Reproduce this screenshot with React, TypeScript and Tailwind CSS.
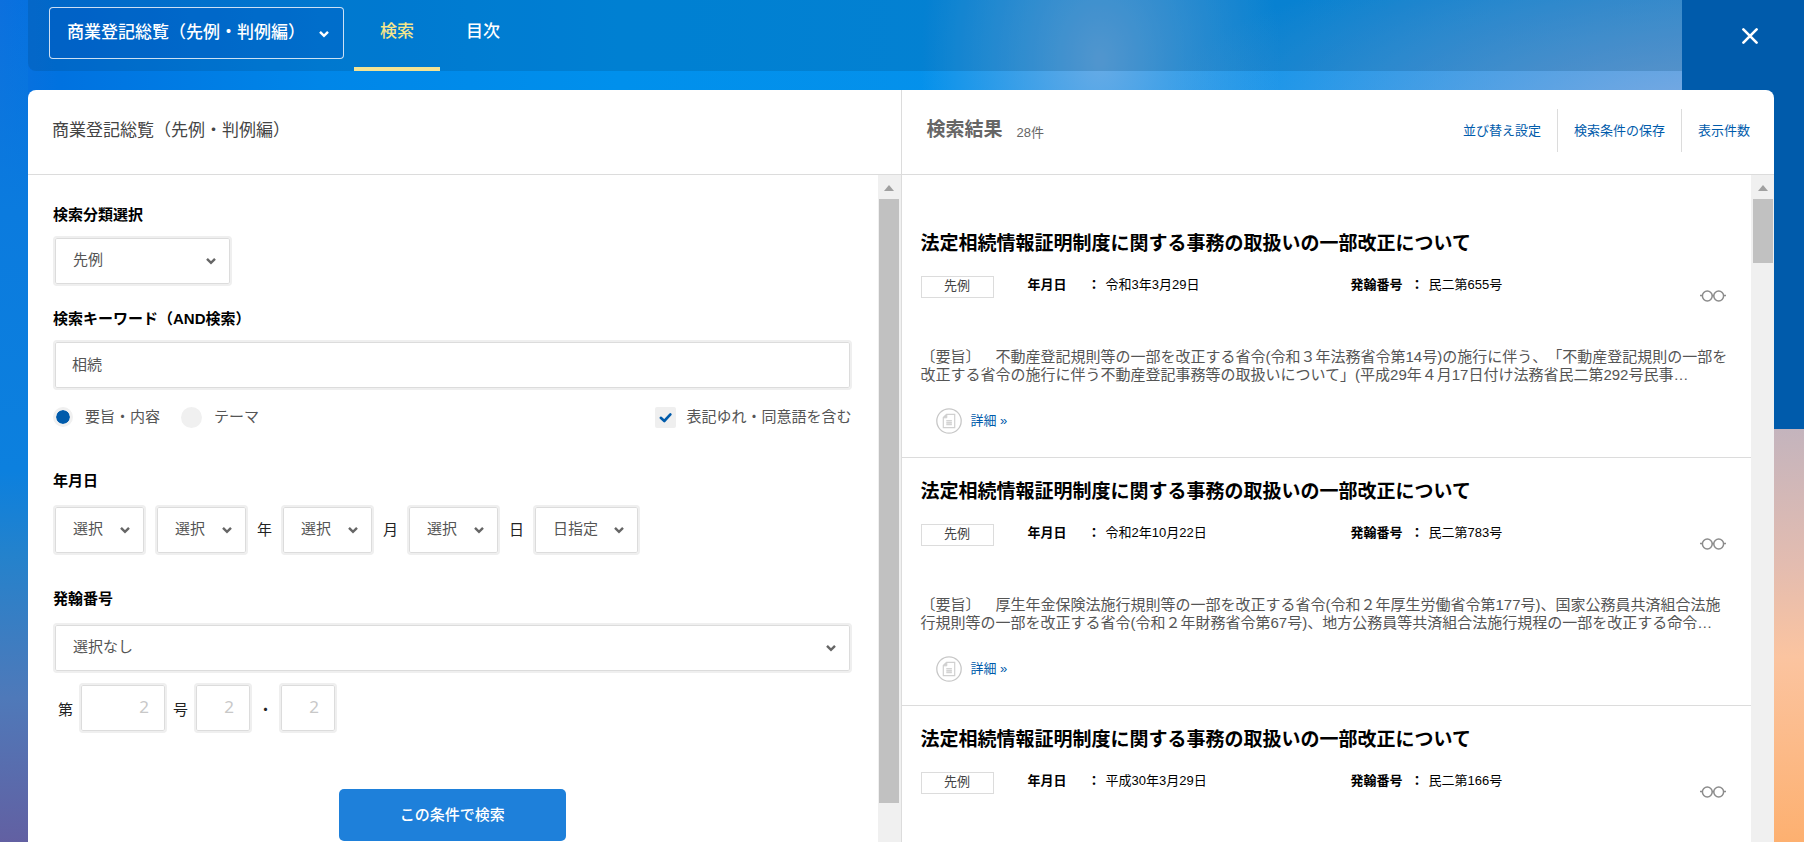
import { useId, useState, type ReactNode } from "react";

type Result = {
  title: string;
  kind: string;
  date: string;
  number: string;
  summary?: string;
};

const results: Result[] = [
  {
    title: "法定相続情報証明制度に関する事務の取扱いの一部改正について",
    kind: "先例",
    date: "令和3年3月29日",
    number: "民二第655号",
    summary:
      "〔要旨〕　不動産登記規則等の一部を改正する省令(令和３年法務省令第14号)の施行に伴う、「不動産登記規則の一部を改正する省令の施行に伴う不動産登記事務等の取扱いについて」(平成29年４月17日付け法務省民二第292号民事…",
  },
  {
    title: "法定相続情報証明制度に関する事務の取扱いの一部改正について",
    kind: "先例",
    date: "令和2年10月22日",
    number: "民二第783号",
    summary:
      "〔要旨〕　厚生年金保険法施行規則等の一部を改正する省令(令和２年厚生労働省令第177号)、国家公務員共済組合法施行規則等の一部を改正する省令(令和２年財務省令第67号)、地方公務員等共済組合法施行規程の一部を改正する命令…",
  },
  {
    title: "法定相続情報証明制度に関する事務の取扱いの一部改正について",
    kind: "先例",
    date: "平成30年3月29日",
    number: "民二第166号",
  },
];

function Chevron({ className }: { className: string }) {
  return (
    <svg
      aria-hidden="true"
      viewBox="0 0 10 8"
      fill="none"
      stroke="currentColor"
      strokeWidth="2.4"
      className={className}
    >
      <path d="M1 1.8 5 5.8 9 1.8" />
    </svg>
  );
}

const frame =
  "h-[50px] rounded-[4px] border-2 border-[#efefef] bg-white shadow-[inset_0_0_0_1px_#dcdcdc] outline-none";

function Select({ label, value, width }: { label: string; value: string; width: string }) {
  return (
    <span className={`relative block ${width}`}>
      <select
        aria-label={label}
        defaultValue={value}
        className={`${frame} w-full appearance-none pr-8 pb-0.5 pl-[18px] text-[15px] text-[#555]`}
      >
        <option>{value}</option>
      </select>
      <Chevron className="pointer-events-none absolute top-[21px] right-4 h-2 w-2.5 text-[#666]" />
    </span>
  );
}

function FieldTitle({ children, htmlFor }: { children: ReactNode; htmlFor?: string }) {
  return (
    <label htmlFor={htmlFor} className="block text-[15px] leading-6 font-bold text-black">
      {children}
    </label>
  );
}

function ScrollTrack({ thumb }: { thumb: string }) {
  return (
    <div aria-hidden="true" className="flex w-[23px] shrink-0 flex-col items-center bg-[#f0f0f0]">
      <svg viewBox="0 0 10 6" className="mt-2.5 mb-2 h-1.5 w-2.5 shrink-0 fill-[#a0a0a0]">
        <path d="M5 0 10 6H0z" />
      </svg>
      <div className="w-full flex-1 px-px">
        <div className={`mx-auto w-5 bg-[#c1c1c1] ${thumb}`} />
      </div>
    </div>
  );
}

function NumberBox({ label, width }: { label: string; width: string }) {
  return (
    <input
      aria-label={label}
      inputMode="numeric"
      placeholder="2"
      className={`${frame} ${width} pr-4 pb-1 text-right font-['Noto_Sans',sans-serif] text-[17px] text-[#555] placeholder:text-[#c8c8c8]`}
    />
  );
}

function Glasses() {
  return (
    <svg viewBox="0 0 26 12" fill="none" stroke="#8c8c8c" strokeWidth="1.5" className="h-3 w-[26px]">
      <circle cx="7.3" cy="6" r="4.9" />
      <circle cx="18.7" cy="6" r="4.9" />
      <path d="M0 5.6h2.5M12 5.6h2M23.5 5.6H26" />
    </svg>
  );
}

function DocumentBadge() {
  return (
    <svg viewBox="0 0 26 26" fill="none" className="size-[26px]">
      <circle cx="13" cy="13" r="12.2" stroke="#c8c8c8" strokeWidth="1.3" />
      <path d="M10.5 6.3h8.2v13.4H7.3V9.5z" stroke="#d0d0d0" strokeWidth="1.2" />
      <path d="M10.8 6.3v3.5H7.3" fill="#d0d0d0" stroke="#d0d0d0" />
      <path d="M10.3 12.8h5.6M10.3 14.7h5.6M10.3 16.6h5.6" stroke="#d4d4d4" strokeWidth="1.5" />
    </svg>
  );
}

function Meta({ name, value }: { name: string; value: string }) {
  return (
    <div className="flex text-[13px] leading-[18px] text-black">
      <dt className="flex w-[78px] justify-between pr-[5px] font-bold">
        {name}
        <span>：</span>
      </dt>
      <dd>{value}</dd>
    </div>
  );
}

function ResultItem({ item }: { item: Result }) {
  return (
    <li className="border-b border-[#dcdcdc] pt-[22px] pr-[17px] pb-[23px] pl-[19px] last:border-b-0">
      <h3 className="text-[19px] leading-6 font-bold text-black">{item.title}</h3>
      <div className="mt-5 flex h-[26px] items-start">
        <span className="h-[22px] w-[73px] border border-[#dcdcdc] text-center text-[13px] leading-[18px] text-[#444]">
          {item.kind}
        </span>
        <dl className="ml-[34px] grid grid-cols-[323px_auto]">
          <Meta name="年月日" value={item.date} />
          <Meta name="発翰番号" value={item.number} />
        </dl>
        <button type="button" aria-label="閲覧" className="mr-2 ml-auto self-end">
          <Glasses />
        </button>
      </div>
      {item.summary && (
        <>
          <p className="mt-[46px] text-[15px] leading-[18px] text-[#555] [text-spacing-trim:space-all]">
            {item.summary}
          </p>
          <div className="mt-6 ml-[15px] flex items-center gap-[9px]">
            <DocumentBadge />
            <a href="#detail" className="text-[13px] leading-[18px] text-[#005bab]">
              詳細 »
            </a>
          </div>
        </>
      )}
    </li>
  );
}

export default function App() {
  const [target, setTarget] = useState("summary");
  const [fuzzy, setFuzzy] = useState(true);
  const keywordId = useId();

  return (
    <div className="flex h-screen flex-col overflow-hidden bg-[linear-gradient(#005bab,#005bab),linear-gradient(180deg,#c4b4bd_51%,#e3bcb0_67%,#fbc4a0_78%,#fdb070_100%),linear-gradient(180deg,#0c6fde00_0%,#0b7bde_25%,#0c80de_56%,#2482cc_66%,#4f79b9_83%,#6260a2_100%),radial-gradient(ellipse_180px_260px_at_1100px_60px,#66abe6_0%,#66abe600_100%),radial-gradient(ellipse_560px_170px_at_1720px_110px,#7caae2_0%,#5ca4e400_100%),linear-gradient(90deg,#0c70de_0px,#0072e0_60px,#0086e8_320px,#0090ec_620px,#0a92ea_1300px,#2a96e2_1700px)] bg-[size:122px_429px,30px_100%,28px_100%,100%_100%,100%_100%,100%_100%] bg-[position:right_top,right_top,left_top,left_top,left_top,left_top] bg-no-repeat font-['Liberation_Sans','Noto_Sans_CJK_JP',sans-serif]">
      <header className="flex h-[90px] shrink-0 pl-7">
        <div className="flex h-[71px] flex-1 rounded-bl-lg bg-[#00406c]/20 pl-[21px]">
          <span className="relative mt-[7px] block w-[295px]">
            <select
              aria-label="書籍"
              defaultValue="商業登記総覧（先例・判例編）"
              className="h-[52px] w-full appearance-none rounded-[4px] border border-white/80 bg-[#0050be]/25 pl-[17px] text-[17px] font-medium text-white"
            >
              <option>商業登記総覧（先例・判例編）</option>
            </select>
            <Chevron className="pointer-events-none absolute top-[23px] right-[14px] h-2 w-3 text-white" />
          </span>
          <nav className="ml-2.5 flex text-[17px] leading-[64px] font-medium">
            <a href="#search" className="w-[86px] border-b-4 border-[#f3e394] text-center text-[#f7e68a]">
              検索
            </a>
            <a href="#contents" className="w-[86px] text-center text-white">
              目次
            </a>
          </nav>
        </div>
        <div className="flex w-[122px] justify-end pr-[46px]">
          <button type="button" aria-label="閉じる" className="mt-7 size-4">
            <svg viewBox="0 0 16 16" stroke="#fff" strokeWidth="2.6" strokeLinecap="round" className="size-4">
              <path d="M1.4 1.4 14.6 14.6M14.6 1.4 1.4 14.6" />
            </svg>
          </button>
        </div>
      </header>

      <main className="mr-[30px] ml-7 flex min-h-0 flex-1 overflow-hidden rounded-t-lg bg-white">
        <section className="flex min-w-0 flex-1 flex-col border-r border-[#dcdcdc]">
          <h1 className="flex h-[85px] shrink-0 items-center border-b border-[#dcdcdc] px-6 pb-[3px] text-[17px] text-[#444]">
            商業登記総覧（先例・判例編）
          </h1>
          <div className="flex min-h-0 flex-1">
            <form className="min-w-0 flex-1 pt-7 pr-[26px] pl-[25px]" onSubmit={(e) => e.preventDefault()}>
              <FieldTitle>検索分類選択</FieldTitle>
              <div className="mt-[9px]">
                <Select label="検索分類選択" value="先例" width="w-[179px]" />
              </div>

              <div className="mt-[21px]">
                <FieldTitle htmlFor={keywordId}>検索キーワード（AND検索）</FieldTitle>
                <input
                  id={keywordId}
                  defaultValue="相続"
                  className={`${frame} mt-[9px] w-full px-[17px] pb-1 text-[15px] text-[#555]`}
                />
              </div>
              <div className="mt-[15px] flex h-6 items-center text-[15px] text-[#555]">
                <label className="flex items-center gap-3">
                  <input
                    type="radio"
                    name="target"
                    checked={target === "summary"}
                    onChange={() => setTarget("summary")}
                    className="size-5 appearance-none rounded-full border-[3px] border-[#f0f0f0] bg-[#f0f0f0] checked:bg-[#005bab] checked:bg-clip-padding"
                  />
                  要旨・内容
                </label>
                <label className="ml-[21px] flex items-center gap-3">
                  <input
                    type="radio"
                    name="target"
                    checked={target === "theme"}
                    onChange={() => setTarget("theme")}
                    className="size-[21px] appearance-none rounded-full border-[3px] border-[#f0f0f0] bg-[#f0f0f0] checked:bg-[#005bab] checked:bg-clip-padding"
                  />
                  テーマ
                </label>
                <label className="ml-auto flex items-center gap-2.5">
                  <span className="relative block size-[21px]">
                    <input
                      type="checkbox"
                      checked={fuzzy}
                      onChange={(e) => setFuzzy(e.target.checked)}
                      className="block size-[21px] appearance-none rounded-[2px] bg-[#efefef]"
                    />
                    {fuzzy && (
                      <svg
                        viewBox="0 0 21 21"
                        fill="none"
                        stroke="#005bab"
                        strokeWidth="2.6"
                        strokeLinecap="round"
                        strokeLinejoin="round"
                        className="pointer-events-none absolute inset-0"
                      >
                        <path d="M5.8 10.8 9.3 14 15.4 7.4" />
                      </svg>
                    )}
                  </span>
                  表記ゆれ・同意語を含む
                </label>
              </div>

              <div className="mt-10">
                <FieldTitle>年月日</FieldTitle>
                <div className="mt-3 flex items-center gap-[9px] text-[15px] text-[#222]">
                  <Select label="元号" value="選択" width="w-[93px]" />
                  <Select label="年" value="選択" width="w-[93px]" />
                  <span>年</span>
                  <Select label="月" value="選択" width="w-[93px]" />
                  <span>月</span>
                  <Select label="日" value="選択" width="w-[93px]" />
                  <span>日</span>
                  <Select label="日付の指定方法" value="日指定" width="w-[107px]" />
                </div>
              </div>

              <div className="mt-8">
                <FieldTitle>発翰番号</FieldTitle>
                <div className="mt-3">
                  <Select label="発翰番号" value="選択なし" width="w-full" />
                </div>
                <div className="mt-2.5 flex items-center gap-1.5 pl-[5px] text-[15px] text-[#222]">
                  <span className="pt-1">第</span>
                  <NumberBox label="第" width="w-[88px]" />
                  <span className="pt-1">号</span>
                  <NumberBox label="号" width="w-[58px]" />
                  <span className="pt-1">・</span>
                  <NumberBox label="枝番号" width="w-[58px]" />
                </div>
              </div>

              <button
                type="submit"
                className="mx-auto mt-14 block h-[52px] w-[227px] rounded-[5px] bg-[#1e80da] text-[15px] font-medium text-white"
              >
                この条件で検索
              </button>
            </form>
            <ScrollTrack thumb="h-[94%]" />
          </div>
        </section>

        <section className="flex min-w-0 flex-1 flex-col">
          <div className="flex h-[85px] shrink-0 items-center border-b border-[#dcdcdc] pr-6 pb-[3px] pl-[25px]">
            <h2 className="text-[19px] font-bold text-[#666]">検索結果</h2>
            <span className="mt-1 ml-3.5 text-[13px] text-[#666]">28件</span>
            <div className="ml-auto flex text-[13px] leading-[43px] text-[#005bab]">
              <button type="button" className="border-r border-[#dcdcdc] px-4">
                並び替え設定
              </button>
              <button type="button" className="border-r border-[#dcdcdc] px-4">
                検索条件の保存
              </button>
              <button type="button" className="pl-4">
                表示件数
              </button>
            </div>
          </div>
          <div className="flex min-h-0 flex-1">
            <ul className="min-w-0 flex-1 overflow-hidden pt-[35px]">
              {results.map((item) => (
                <ResultItem key={item.number} item={item} />
              ))}
            </ul>
            <ScrollTrack thumb="h-[10%]" />
          </div>
        </section>
      </main>
    </div>
  );
}
